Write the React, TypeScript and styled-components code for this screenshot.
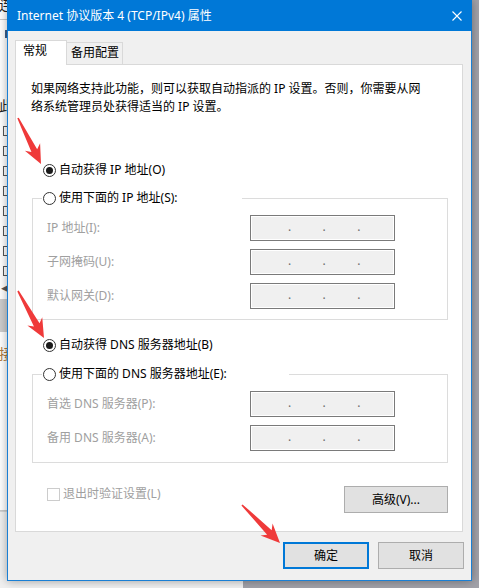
import React from "react";
import styled, { createGlobalStyle } from "styled-components";

const GlobalStyle = createGlobalStyle`
  html, body { margin: 0; padding: 0; background: #a2a2a9; overflow: hidden; }
  #root { width: 479px; height: 588px; }
`;

const Desktop = styled.div`
  position: relative;
  width: 479px;
  height: 588px;
  overflow: hidden;
  background: #a2a2a9;
  font: 12px/18px "Noto Sans", "Noto Sans CJK SC", sans-serif;
  color: #000;
`;

/* ---------- window behind the dialog ---------- */
const BackWindow = styled.div`
  position: absolute;
  left: 0;
  top: 0;
  width: 243px;
  height: 588px;
  background: #fff;
  display: flex;
  flex-direction: column;
  overflow: hidden;
`;

const BgChar = styled.div<{ $mt: number; $color?: string }>`
  margin-top: ${(p) => p.$mt}px;
  margin-left: -1px;
  font: 14px/14px "Noto Sans CJK SC", sans-serif;
  color: ${(p) => p.$color ?? "#222"};
  height: 14px;
`;

const BgRule = styled.div<{ $mt: number }>`
  margin-top: ${(p) => p.$mt}px;
  height: 1px;
  background: #c9c9c9;
`;

const BgMark = styled.div<{ $mt: number }>`
  margin-top: ${(p) => p.$mt}px;
  margin-left: 5px;
  width: 2px;
  height: 8px;
  background: #3b5f8c;
`;

const BgChecks = styled.div`
  margin-top: 14px;
  display: flex;
  flex-direction: column;
  gap: 10px;
  padding-left: 3px;
`;

const BgCheck = styled.div`
  width: 10px;
  height: 10px;
  box-sizing: border-box;
  border: 1px solid #555;
`;

const BgScrollArrow = styled.div`
  margin-top: 8px;
  margin-left: 1px;
  font: 9px/9px "DejaVu Sans", sans-serif;
  color: #555;
`;

const BgBand = styled.div`
  margin-top: 6px;
  height: 33px;
  background: #cdcdcd;
`;

const BgFooter = styled.div`
  margin-top: 0;
  flex: 1;
  background: #f0f0f0;
  border-top: 1px solid #d4d4d4;
`;

/* ---------- dialog ---------- */
const Dialog = styled.section`
  position: absolute;
  left: 7px;
  top: 0;
  width: 465px;
  height: 581px;
  box-sizing: border-box;
  border: 1px solid #1a7fd4;
  border-top: none;
  background: #f0f0f0;
  box-shadow: 0 0 9px rgba(0, 0, 0, 0.35);
  display: flex;
  flex-direction: column;
`;

const TitleBar = styled.header`
  height: 31px;
  margin: 0 -1px;
  padding-left: 10px;
  background: #0078d7;
  color: #fff;
  display: flex;
  align-items: center;
`;

const TitleText = styled.span`
  font-size: 12px;
  line-height: 18px;
  margin-top: 1px;
`;

const CloseButton = styled.span`
  margin-left: auto;
  margin-right: 10px;
  width: 10px;
  height: 10px;
  display: flex;
`;

const Body = styled.div`
  flex: 1;
  padding: 9px 0 0 7px;
  display: flex;
  flex-direction: column;
`;

const TabStrip = styled.div`
  position: relative;
  z-index: 1;
  height: 25px;
  margin-bottom: -1px;
  display: flex;
  align-items: flex-start;
`;

const Tab = styled.div<{ $active?: boolean }>`
  box-sizing: border-box;
  border: 1px solid #d9d9d9;
  border-bottom: none;
  ${(p) =>
    p.$active
      ? `
    width: 52px;
    height: 25px;
    background: #fff;
    padding: 1px 0 0 7px;
  `
      : `
    margin-top: 2px;
    width: 56px;
    height: 22px;
    border-left: none;
    background: #f0f0f0;
    padding: 1px 0 0 4px;
  `}
`;

const Panel = styled.div`
  width: 448px;
  height: 468px;
  box-sizing: border-box;
  border: 1px solid #d9d9d9;
  background: #fff;
  padding: 15px 0 0 15px;
  display: flex;
  flex-direction: column;
`;

const Description = styled.p`
  margin: 0;
  line-height: 18px;
`;

const RadioRow = styled.div<{ $mt: number }>`
  margin-top: ${(p) => p.$mt}px;
  margin-left: 12px;
  height: 18px;
  display: flex;
  align-items: center;
  gap: 3px;
`;

const RadioCircle = styled.span<{ $checked?: boolean }>`
  width: 13px;
  height: 13px;
  box-sizing: border-box;
  border: 1px solid #333;
  border-radius: 50%;
  background: #fff;
  display: flex;
  align-items: center;
  justify-content: center;
  flex: none;
  &::after {
    content: "";
    width: 7px;
    height: 7px;
    border-radius: 50%;
    background: ${(p) => (p.$checked ? "#1a1a1a" : "transparent")};
  }
`;

const Group = styled.fieldset<{ $mt: number }>`
  margin: ${(p) => p.$mt}px 0 0 1px;
  padding: 0;
  width: 416px;
  box-sizing: border-box;
  border: 1px solid #dcdcdc;
  min-width: 0;
`;

const GroupLegend = styled.legend<{ $w: number }>`
  width: ${(p) => p.$w}px;
  box-sizing: border-box;
  height: 18px;
  margin-left: 9px;
  padding: 0 0 0 1px;
  display: flex;
  align-items: center;
  gap: 3px;
  background: #fff;
`;

const FieldList = styled.div<{ $pb: number }>`
  padding: 8px 0 ${(p) => p.$pb}px 14px;
  display: flex;
  flex-direction: column;
  gap: 8px;
`;

const FieldRow = styled.div`
  display: grid;
  grid-template-columns: 203px 145px;
  align-items: center;
  height: 26px;
`;

const FieldLabel = styled.span`
  color: #a0a0a0;
`;

const IpBox = styled.div`
  width: 145px;
  height: 26px;
  box-sizing: border-box;
  border: 1px solid #7a7a7a;
  box-shadow: inset 0 0 0 1px #fff;
  background: #f0f0f0;
  display: flex;
  padding-left: 37px;
  line-height: 22px;
  color: #6d6d6d;
`;

const IpDot = styled.span`
  width: 34.6px;
  flex: none;
`;

const BottomRow = styled.div`
  margin-top: 23px;
  width: 417px;
  display: flex;
  justify-content: space-between;
  align-items: flex-start;
`;

const CheckLabel = styled.div`
  margin-top: -1px;
  padding-left: 16px;
  height: 18px;
  display: flex;
  align-items: center;
  gap: 3px;
  color: #a0a0a0;
`;

const CheckBox = styled.span`
  width: 13px;
  height: 13px;
  box-sizing: border-box;
  border: 1px solid #cccccc;
  background: #fff;
`;

const PushButton = styled.button<{ $default?: boolean; $w: number }>`
  width: ${(p) => p.$w}px;
  height: 27px;
  box-sizing: border-box;
  margin: 0;
  padding: 0;
  font: inherit;
  color: #000;
  background: #e1e1e1;
  border: ${(p) => (p.$default ? "2px solid #0078d7" : "1px solid #adadad")};
  display: flex;
  align-items: center;
  justify-content: center;
`;

const ButtonRow = styled.div`
  margin-top: 10px;
  padding-right: 7px;
  display: flex;
  justify-content: flex-end;
  gap: 9px;
`;

const ArrowLayer = styled.svg`
  position: absolute;
  left: 0;
  top: 0;
  width: 479px;
  height: 588px;
  pointer-events: none;
  z-index: 10;
`;

const IpField = () => (
  <IpBox>
    <IpDot>.</IpDot>
    <IpDot>.</IpDot>
    <IpDot>.</IpDot>
  </IpBox>
);

type ArrowSpec = { x1: number; y1: number; x2: number; y2: number };

const arrows: ArrowSpec[] = [
  { x1: 18, y1: 118, x2: 41, y2: 164 },
  { x1: 18, y1: 291, x2: 44, y2: 338 },
  { x1: 242, y1: 505, x2: 280, y2: 543 },
];

const Arrow = ({ x1, y1, x2, y2 }: ArrowSpec) => {
  const L = Math.hypot(x2 - x1, y2 - y1);
  const deg = (Math.atan2(y2 - y1, x2 - x1) * 180) / Math.PI;
  const pts = `0,-0.8 ${L - 15},-3.2 ${L - 19},-8.5 ${L},0 ${L - 19},8.5 ${L - 15},3.2 0,0.8`;
  return <polygon points={pts} fill="#ef3a3a" transform={`translate(${x1} ${y1}) rotate(${deg})`} />;
};

export default function App() {
  return (
    <>
      <GlobalStyle />
      <Desktop>
        <BackWindow>
          <BgChar $mt={-3}>连</BgChar>
          <BgRule $mt={8} />
          <BgMark $mt={10} />
          <BgChar $mt={60}>此</BgChar>
          <BgChecks>
            {Array.from({ length: 8 }).map((_, i) => (
              <BgCheck key={i} />
            ))}
          </BgChecks>
          <BgScrollArrow>◀</BgScrollArrow>
          <BgBand />
          <BgChar $mt={14} $color="#b07a3a">接</BgChar>
          <BgRule $mt={150} />
          <BgFooter />
        </BackWindow>

        <Dialog>
          <TitleBar>
            <TitleText>Internet 协议版本 4 (TCP/IPv4) 属性</TitleText>
            <CloseButton>
              <svg width="10" height="10" viewBox="0 0 10 10">
                <path d="M0.5 0.5 L9.5 9.5 M9.5 0.5 L0.5 9.5" stroke="#fff" strokeWidth="1.1" fill="none" />
              </svg>
            </CloseButton>
          </TitleBar>
          <Body>
            <TabStrip>
              <Tab $active>常规</Tab>
              <Tab>备用配置</Tab>
            </TabStrip>
            <Panel>
              <Description>
                如果网络支持此功能，则可以获取自动指派的 IP 设置。否则，你需要从网
                <br />
                络系统管理员处获得适当的 IP 设置。
              </Description>

              <RadioRow $mt={45}>
                <RadioCircle $checked />
                自动获得 IP 地址(O)
              </RadioRow>

              <Group $mt={10}>
                <GroupLegend $w={200}>
                  <RadioCircle />
                  使用下面的 IP 地址(S):
                </GroupLegend>
                <FieldList $pb={10}>
                  <FieldRow>
                    <FieldLabel>IP 地址(I):</FieldLabel>
                    <IpField />
                  </FieldRow>
                  <FieldRow>
                    <FieldLabel>子网掩码(U):</FieldLabel>
                    <IpField />
                  </FieldRow>
                  <FieldRow>
                    <FieldLabel>默认网关(D):</FieldLabel>
                    <IpField />
                  </FieldRow>
                </FieldList>
              </Group>

              <RadioRow $mt={16}>
                <RadioCircle $checked />
                自动获得 DNS 服务器地址(B)
              </RadioRow>

              <Group $mt={11}>
                <GroupLegend $w={247}>
                  <RadioCircle />
                  使用下面的 DNS 服务器地址(E):
                </GroupLegend>
                <FieldList $pb={11}>
                  <FieldRow>
                    <FieldLabel>首选 DNS 服务器(P):</FieldLabel>
                    <IpField />
                  </FieldRow>
                  <FieldRow>
                    <FieldLabel>备用 DNS 服务器(A):</FieldLabel>
                    <IpField />
                  </FieldRow>
                </FieldList>
              </Group>

              <BottomRow>
                <CheckLabel>
                  <CheckBox />
                  退出时验证设置(L)
                </CheckLabel>
                <PushButton $w={104}>高级(V)...</PushButton>
              </BottomRow>
            </Panel>
            <ButtonRow>
              <PushButton $default $w={86}>
                确定
              </PushButton>
              <PushButton $w={86}>取消</PushButton>
            </ButtonRow>
          </Body>
        </Dialog>

        <ArrowLayer viewBox="0 0 479 588">
          {arrows.map((a, i) => (
            <Arrow key={i} {...a} />
          ))}
        </ArrowLayer>
      </Desktop>
    </>
  );
}
